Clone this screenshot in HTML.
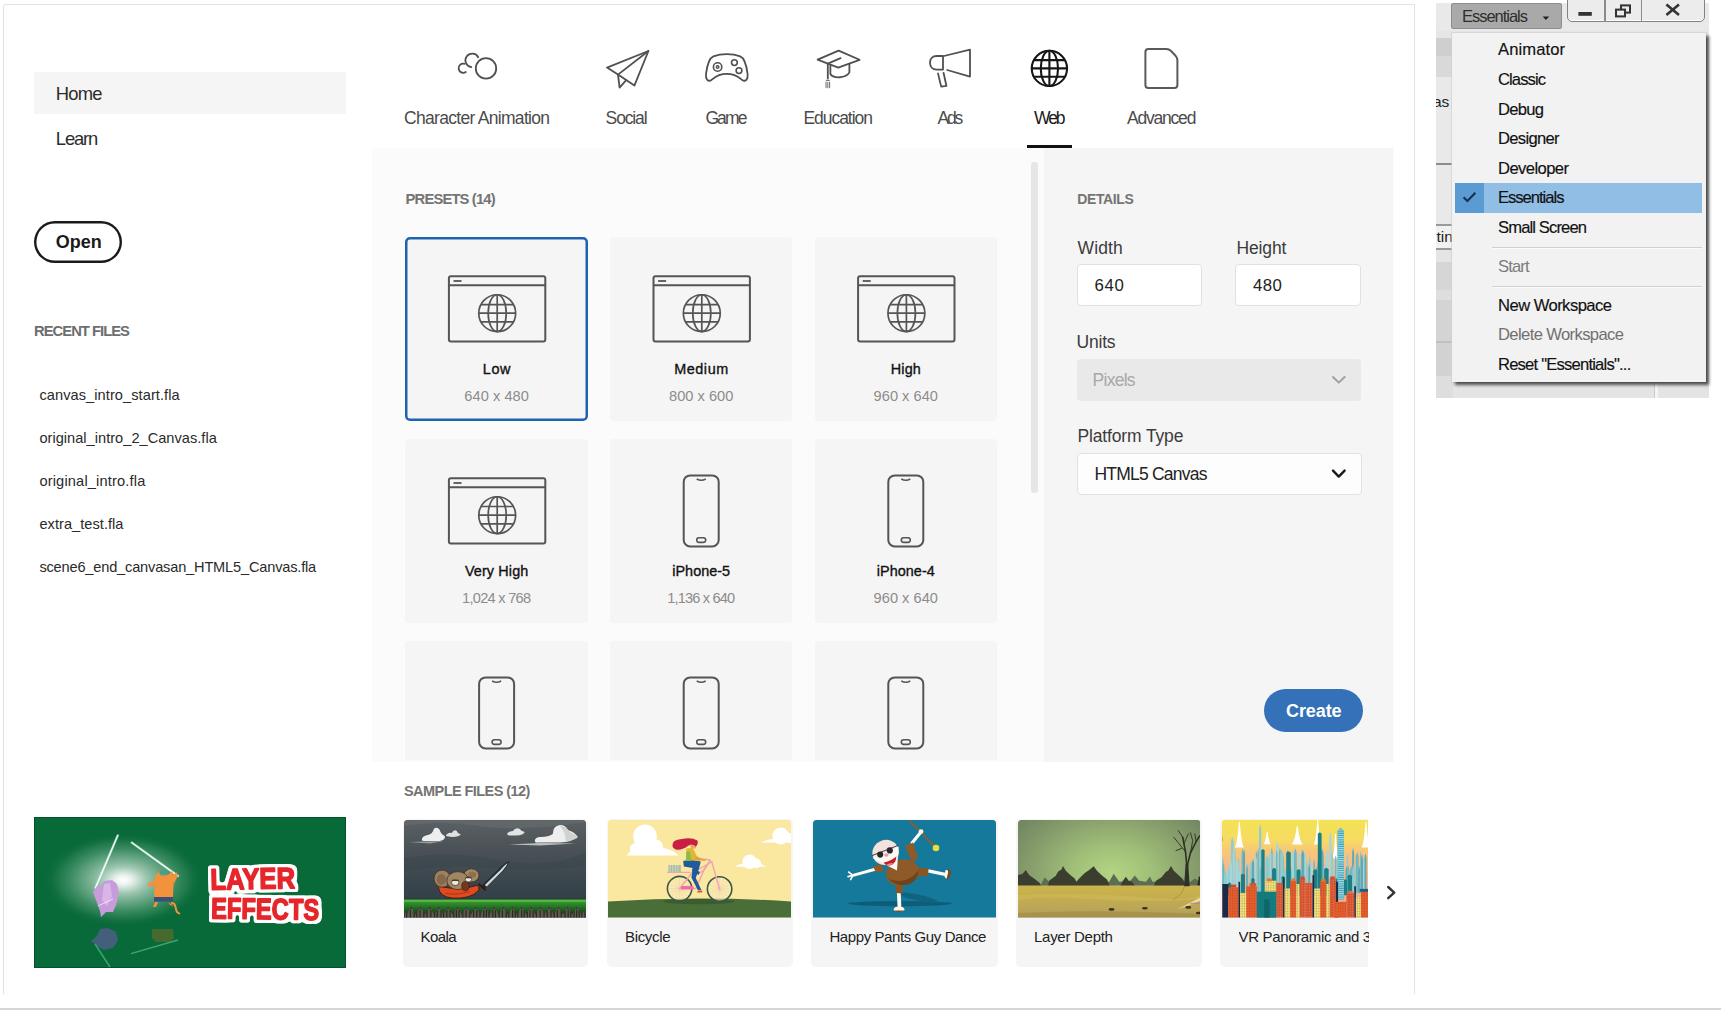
<!DOCTYPE html>
<html lang="en"><head><meta charset="utf-8"><title>Animate - Home</title>
<style>
html,body{margin:0;padding:0;background:#fff;}
body{width:1725px;height:1015px;position:relative;overflow:hidden;font-family:"Liberation Sans",Arial,sans-serif;}
.t{position:absolute;white-space:nowrap;display:block;}
.b{position:absolute;box-sizing:border-box;}
svg{position:absolute;overflow:visible;}
</style></head><body>

<div class="b" style="left:3px;top:4px;width:1412px;height:990px;border:1px solid #e2e2e2;border-bottom:none;border-radius:3px 0 0 0;"></div>
<div class="b" style="left:0px;top:1008px;width:1721px;height:2px;background:#d6d6d6;"></div>
<div class="b" style="left:34px;top:72px;width:312px;height:42px;background:#f5f5f5;"></div>
<span class="t" style="left:55.80px;top:84.62px;font-size:18.4px;line-height:18.4px;color:#2c2c2c;letter-spacing:-0.776px;">Home</span>
<span class="t" style="left:55.80px;top:129.92px;font-size:18.4px;line-height:18.4px;color:#2c2c2c;letter-spacing:-1.126px;">Learn</span>
<div class="b" style="left:34px;top:221.2px;width:88px;height:41.80000000000001px;box-shadow:inset 0 0 0 2.4px #1a1a1a;border-radius:21px;"></div>
<span class="t" style="left:55.80px;top:233.26px;font-size:18px;line-height:18px;color:#1a1a1a;font-weight:700;">Open</span>
<span class="t" style="left:34.00px;top:324.07px;font-size:14.8px;line-height:14.8px;color:#6e6e6e;letter-spacing:-0.994px;font-weight:700;">RECENT FILES</span>
<span class="t" style="left:39.40px;top:387.64px;font-size:14.6px;line-height:14.6px;color:#2a2a2a;letter-spacing:0.074px;">canvas_intro_start.fla</span>
<span class="t" style="left:39.40px;top:430.84px;font-size:14.6px;line-height:14.6px;color:#2a2a2a;letter-spacing:0.022px;">original_intro_2_Canvas.fla</span>
<span class="t" style="left:39.40px;top:473.74px;font-size:14.6px;line-height:14.6px;color:#2a2a2a;letter-spacing:0.168px;">original_intro.fla</span>
<span class="t" style="left:39.40px;top:516.94px;font-size:14.6px;line-height:14.6px;color:#2a2a2a;letter-spacing:0.042px;">extra_test.fla</span>
<span class="t" style="left:39.40px;top:560.14px;font-size:14.6px;line-height:14.6px;color:#2a2a2a;letter-spacing:-0.180px;">scene6_end_canvasan_HTML5_Canvas.fla</span>
<span class="t" style="left:404.00px;top:109.89px;font-size:17.5px;line-height:17.5px;color:#4b4b4b;letter-spacing:-0.697px;">Character Animation</span>
<span class="t" style="left:605.60px;top:109.89px;font-size:17.5px;line-height:17.5px;color:#4b4b4b;letter-spacing:-1.137px;">Social</span>
<span class="t" style="left:705.40px;top:109.89px;font-size:17.5px;line-height:17.5px;color:#4b4b4b;letter-spacing:-1.896px;">Game</span>
<span class="t" style="left:803.40px;top:109.89px;font-size:17.5px;line-height:17.5px;color:#4b4b4b;letter-spacing:-1.034px;">Education</span>
<span class="t" style="left:937.60px;top:109.89px;font-size:17.5px;line-height:17.5px;color:#4b4b4b;letter-spacing:-2.194px;">Ads</span>
<span class="t" style="left:1034.00px;top:109.89px;font-size:17.5px;line-height:17.5px;color:#1a1a1a;letter-spacing:-2.050px;">Web</span>
<span class="t" style="left:1127.00px;top:109.89px;font-size:17.5px;line-height:17.5px;color:#4b4b4b;letter-spacing:-1.211px;">Advanced</span>
<div class="b" style="left:1027px;top:145px;width:45.40000000000009px;height:2.5999999999999943px;background:#111;"></div>
<div class="b" style="left:372px;top:148px;width:1022px;height:614.4px;background:#fbfbfb;"></div>
<div class="b" style="left:1043.5px;top:148px;width:349.5px;height:614.4px;background:#f5f5f5;"></div>
<div class="b" style="left:1031px;top:162px;width:7px;height:331px;background:#e6e6e6;border-radius:3px;"></div>
<span class="t" style="left:405.60px;top:192.07px;font-size:14.8px;line-height:14.8px;color:#747474;letter-spacing:-0.866px;font-weight:700;">PRESETS (14)</span>
<div class="b" style="left:372px;top:148px;width:660px;height:612.4px;overflow:hidden;">
<div class="b" style="left:33.4px;top:89px;width:182.4px;height:184px;background:#f5f5f5;border-radius:4px;box-shadow:inset 0 0 0 2.5px #1e63b3;border-radius:5px;"></div>
<div class="b" style="left:238px;top:89px;width:182.39999999999998px;height:184px;background:#f5f5f5;border-radius:4px;"></div>
<div class="b" style="left:442.6px;top:89px;width:182.39999999999998px;height:184px;background:#f5f5f5;border-radius:4px;"></div>
<div class="b" style="left:33.4px;top:291px;width:182.4px;height:184px;background:#f5f5f5;border-radius:4px;"></div>
<div class="b" style="left:238px;top:291px;width:182.39999999999998px;height:184px;background:#f5f5f5;border-radius:4px;"></div>
<div class="b" style="left:442.6px;top:291px;width:182.39999999999998px;height:184px;background:#f5f5f5;border-radius:4px;"></div>
<div class="b" style="left:33.4px;top:493px;width:182.4px;height:184px;background:#f5f5f5;border-radius:4px;"></div>
<div class="b" style="left:238px;top:493px;width:182.39999999999998px;height:184px;background:#f5f5f5;border-radius:4px;"></div>
<div class="b" style="left:442.6px;top:493px;width:182.39999999999998px;height:184px;background:#f5f5f5;border-radius:4px;"></div>
</div>
<span class="t" style="left:482.80px;top:362.11px;font-size:14.4px;line-height:14.4px;color:#111;letter-spacing:0.588px;-webkit-text-stroke:0.35px #111;">Low</span>
<span class="t" style="left:464.30px;top:388.64px;font-size:14.6px;line-height:14.6px;color:#8c8c8c;letter-spacing:0.054px;">640 x 480</span>
<span class="t" style="left:674.20px;top:362.11px;font-size:14.4px;line-height:14.4px;color:#111;letter-spacing:0.562px;-webkit-text-stroke:0.35px #111;">Medium</span>
<span class="t" style="left:669.00px;top:388.64px;font-size:14.6px;line-height:14.6px;color:#8c8c8c;letter-spacing:0.029px;">800 x 600</span>
<span class="t" style="left:890.80px;top:362.11px;font-size:14.4px;line-height:14.4px;color:#111;letter-spacing:0.136px;-webkit-text-stroke:0.35px #111;">High</span>
<span class="t" style="left:873.60px;top:388.64px;font-size:14.6px;line-height:14.6px;color:#8c8c8c;letter-spacing:0.029px;">960 x 640</span>
<span class="t" style="left:464.90px;top:564.11px;font-size:14.4px;line-height:14.4px;color:#111;letter-spacing:0.122px;-webkit-text-stroke:0.35px #111;">Very High</span>
<span class="t" style="left:462.10px;top:590.64px;font-size:14.6px;line-height:14.6px;color:#8c8c8c;letter-spacing:-0.728px;">1,024 x 768</span>
<span class="t" style="left:672.20px;top:564.11px;font-size:14.4px;line-height:14.4px;color:#111;letter-spacing:0.047px;-webkit-text-stroke:0.35px #111;">iPhone-5</span>
<span class="t" style="left:667.20px;top:590.64px;font-size:14.6px;line-height:14.6px;color:#8c8c8c;letter-spacing:-0.828px;">1,136 x 640</span>
<span class="t" style="left:876.80px;top:564.11px;font-size:14.4px;line-height:14.4px;color:#111;letter-spacing:0.047px;-webkit-text-stroke:0.35px #111;">iPhone-4</span>
<span class="t" style="left:873.60px;top:590.64px;font-size:14.6px;line-height:14.6px;color:#8c8c8c;letter-spacing:0.029px;">960 x 640</span>
<span class="t" style="left:1077.20px;top:191.95px;font-size:14px;line-height:14px;color:#747474;letter-spacing:-0.378px;font-weight:700;">DETAILS</span>
<span class="t" style="left:1077.60px;top:240.29px;font-size:17.5px;line-height:17.5px;color:#3c3c3c;letter-spacing:0.072px;">Width</span>
<span class="t" style="left:1236.40px;top:240.29px;font-size:17.5px;line-height:17.5px;color:#3c3c3c;letter-spacing:-0.115px;">Height</span>
<div class="b" style="left:1077px;top:264.4px;width:125.40000000000009px;height:42.0px;background:#fff;border:1px solid #e1e1e1;border-radius:4px;"></div>
<div class="b" style="left:1235.4px;top:264.4px;width:125.59999999999991px;height:42.0px;background:#fff;border:1px solid #e1e1e1;border-radius:4px;"></div>
<span class="t" style="left:1094.40px;top:277.78px;font-size:16.8px;line-height:16.8px;color:#222;letter-spacing:0.772px;">640</span>
<span class="t" style="left:1253.00px;top:277.78px;font-size:16.8px;line-height:16.8px;color:#222;letter-spacing:0.472px;">480</span>
<span class="t" style="left:1076.60px;top:334.09px;font-size:17.5px;line-height:17.5px;color:#3c3c3c;letter-spacing:-0.225px;">Units</span>
<div class="b" style="left:1077px;top:358.6px;width:284px;height:42.39999999999998px;background:#e9e9e9;border-radius:4px;"></div>
<span class="t" style="left:1092.60px;top:372.19px;font-size:17.5px;line-height:17.5px;color:#a8a8a8;letter-spacing:-0.745px;">Pixels</span>
<span class="t" style="left:1077.40px;top:427.79px;font-size:17.5px;line-height:17.5px;color:#3c3c3c;letter-spacing:-0.135px;">Platform Type</span>
<div class="b" style="left:1077px;top:453px;width:285px;height:42px;background:#fdfdfd;border:1px solid #e1e1e1;border-radius:4px;"></div>
<span class="t" style="left:1094.40px;top:465.59px;font-size:17.5px;line-height:17.5px;color:#222;letter-spacing:-0.776px;">HTML5 Canvas</span>
<div class="b" style="left:1264.4px;top:689px;width:98.59999999999991px;height:43px;background:#3571b8;border-radius:21.5px;"></div>
<span class="t" style="left:1286.00px;top:702.16px;font-size:18px;line-height:18px;color:#fff;letter-spacing:-0.094px;font-weight:700;">Create</span>
<span class="t" style="left:404.00px;top:784.13px;font-size:14.5px;line-height:14.5px;color:#747474;letter-spacing:-0.560px;font-weight:700;">SAMPLE FILES (12)</span>
<div class="b" style="left:402.6px;top:819px;width:185.39999999999998px;height:148px;background:#f5f5f5;border-radius:5px;"></div>
<svg width="182.0" height="97.5" viewBox="404.2 820 182.0 97.5" style="left:404.2px;top:820px;overflow:hidden;"><defs><clipPath id="cp0"><path d="M404.2 917.5V823.5Q404.2 820 407.7 820H582.7Q586.2 820 586.2 823.5V917.5Z"/></clipPath><linearGradient id="ksky" x1="0" y1="0" x2="0" y2="1"><stop offset="0" stop-color="#5b6063"/><stop offset="0.3" stop-color="#4a5257"/><stop offset="0.7" stop-color="#36434a"/><stop offset="1" stop-color="#2d3b43"/></linearGradient>
<linearGradient id="kgr" x1="0" y1="0" x2="0" y2="1"><stop offset="0" stop-color="#3fa231"/><stop offset="0.35" stop-color="#2c8228"/><stop offset="0.7" stop-color="#1e5a1e"/><stop offset="1" stop-color="#143c16"/></linearGradient></defs><g clip-path="url(#cp0)"><rect x="404.2" y="820" width="182" height="98" fill="url(#ksky)"/><path d="M404 826Q440 820 480 826T586 822V820H404Z" fill="#6a6f72" opacity="0.5"/><path d="M404 858Q450 850 500 860T586 852V866Q540 872 490 868T404 872Z" fill="#3a464c" opacity="0.5"/><g fill="#eeeeee"><path d="M422 840Q422 836 428 835Q433 834 434 829Q437 826 440 830Q441 834 445 836Q446 840 440 841H426Q422 841 422 840Z"/><path d="M446 836Q448 832 452 833Q454 829 457 831Q458 834 461 834Q460 837 452 837Z" opacity="0.9"/><path d="M507 834Q509 831 513 831Q516 827 520 829Q521 831 525 832Q524 835 516 835.6H509Z" opacity="0.92"/><path d="M535 841Q535 837 541 837Q549 837 553 834Q553 826 560 825Q566 825 568 830Q575 832 578 837Q572 842 560 842.6H538Q535 843 535 841Z"/></g><path d="M560 826Q567 826 570 832Q576 834 578 838L566 842Q566 832 560 826Z" fill="#c9c9c9" opacity="0.8"/><path d="M509 844.6L540 843L576 843.6L540 845.4Z" fill="#d8dadb" opacity="0.8"/><path d="M409 842L444 841L430 843.4Z" fill="#b9bcbe" opacity="0.7"/><rect x="404.2" y="909" width="182" height="9" fill="#5f584e"/><path d="M404.2 910V918M406.8 910V918M410.6 910V918M414.4 910V918M417.0 910V918M420.2 910V918M424.0 910V918M427.2 910V918M431.0 910V918M434.8 910V918M437.4 910V918M441.2 910V918M443.8 910V918M447.0 910V918M450.2 910V918M454.0 910V918M456.6 910V918M459.2 910V918M463.0 910V918M466.2 910V918M470.0 910V918M473.8 910V918M477.0 910V918M480.2 910V918M484.0 910V918M486.6 910V918M489.2 910V918M493.0 910V918M495.6 910V918M499.4 910V918M502.6 910V918M506.4 910V918M509.0 910V918M512.8 910V918M515.4 910V918M518.0 910V918M521.8 910V918M524.4 910V918M527.6 910V918M530.2 910V918M533.4 910V918M536.6 910V918M540.4 910V918M544.2 910V918M547.4 910V918M551.2 910V918M554.4 910V918M557.6 910V918M561.4 910V918M565.2 910V918M568.4 910V918M571.0 910V918M574.2 910V918M576.8 910V918M579.4 910V918M582.0 910V918M585.2 910V918" stroke="#2d2923" stroke-width="1.2"/><rect x="404.2" y="898.6" width="182" height="1.2" fill="#26303a"/><path d="M404.2 899.4H586.2V909L581.6 914.6L577.0 906.6L572.4 914.6L567.8 906.6L563.2 914.6L558.6 906.6L554.0 914.6L549.4 906.6L544.8 914.6L540.2 906.6L535.6 914.6L531.0 906.6L526.4 914.6L521.8 906.6L517.2 914.6L512.6 906.6L508.0 914.6L503.4 906.6L498.8 914.6L494.2 906.6L489.6 914.6L485.0 906.6L480.4 914.6L475.8 906.6L471.2 914.6L466.6 906.6L462.0 914.6L457.4 906.6L452.8 914.6L448.2 906.6L443.6 914.6L439.0 906.6L434.4 914.6L429.8 906.6L425.2 914.6L420.6 906.6L416.0 914.6L411.4 906.6L406.8 914.6L402.2 906.6Z" fill="url(#kgr)"/><rect x="404.2" y="899.8" width="182" height="2.2" fill="#58c044" opacity="0.75"/><path d="M438.6 887.4Q440 896.6 452 898Q470 899.4 478.4 891Q480.6 887 477 885.4Q460 891 440 886.4Z" fill="#e04a20" stroke="#4a170c" stroke-width="0.9"/><path d="M446 893.4Q458 895.6 470 891.4" stroke="#a02c12" stroke-width="0.8" fill="none"/><g stroke="#3e2f20" stroke-width="0.8"><ellipse cx="442.4" cy="878.6" rx="8.2" ry="8.6" fill="#9c815d"/><ellipse cx="471.6" cy="875.4" rx="7.6" ry="6.6" fill="#a58a66"/><ellipse cx="458" cy="880.6" rx="11" ry="9" fill="#a08662"/></g><ellipse cx="441.6" cy="879.4" rx="4.6" ry="5.4" fill="#86694a"/><ellipse cx="472.4" cy="874.6" rx="4" ry="3.2" fill="#8d7150"/><ellipse cx="465.6" cy="886" rx="3.8" ry="4.8" fill="#74371f" stroke="#3a1c10" stroke-width="0.6"/><ellipse cx="455.4" cy="882.6" rx="3.7" ry="3" fill="#e9e6e0" stroke="#33261a" stroke-width="0.7"/><ellipse cx="468.6" cy="879.4" rx="3.2" ry="2.6" fill="#e9e6e0" stroke="#33261a" stroke-width="0.7"/><path d="M452 880.4H459M465.6 877.6H471.6" stroke="#4a3a2a" stroke-width="1.2"/><path d="M481.6 886L500 868Q506 862 509.4 861.2Q509 864.6 503.6 871L485 888.6Z" fill="#23282c"/><path d="M485 885L501 869.4Q505.6 864.4 508 863Q507 866 503 870.4L487 886.6Z" fill="#d2d6d9"/><path d="M478.6 883.6L486 890.4" stroke="#3a140c" stroke-width="1.8"/></g></svg>
<span class="t" style="left:420.60px;top:929.30px;font-size:15px;line-height:15px;color:#222;letter-spacing:-0.600px;">Koala</span>
<div class="b" style="left:607px;top:819px;width:186px;height:148px;background:#f5f5f5;border-radius:5px;"></div>
<svg width="183.0" height="97.5" viewBox="608.2 820 183.0 97.5" style="left:608.2px;top:820px;overflow:hidden;"><defs><clipPath id="cp1"><path d="M608.2 917.5V823.5Q608.2 820 611.7 820H787.7Q791.2 820 791.2 823.5V917.5Z"/></clipPath></defs><g clip-path="url(#cp1)"><rect x="608.2" y="820" width="183" height="98" fill="#fae8a1"/><g fill="#ffffff"><circle cx="645.2" cy="836.4" r="11.8"/><circle cx="656" cy="847" r="7.4"/><circle cx="636" cy="849" r="6"/><path d="M626.6 855.6Q632 848 640 848H664Q674 850 678.8 855.6Z"/><circle cx="781" cy="836" r="8.4"/><circle cx="790" cy="838" r="5"/><path d="M761 842.4Q768 839 774 839H792V842.4Z"/><circle cx="749.8" cy="861.8" r="7.2"/><circle cx="756.4" cy="863.4" r="4.8"/><path d="M734.6 866.8Q740 863.6 745 863.6H760Q764 865 766 866.8Z"/></g><path d="M608.2 901.4Q700 895.4 791.2 901.4V918H608.2Z" fill="#4a6e38"/><ellipse cx="699" cy="901.6" rx="36" ry="2.6" fill="#3c5c2e"/><circle cx="679.8" cy="888.6" r="12.2" fill="#fbeeb8" fill-opacity="0.55" stroke="#3c574a" stroke-width="1.6"/><path d="M668.8 888.6L690.8 888.6M669.6 884.4L690.0 892.8M672.0 880.8L687.6 896.4M675.6 878.4L684.0 898.8M679.8 877.6L679.8 899.6M684.0 878.4L675.6 898.8M687.6 880.8L672.0 896.4M690.0 884.4L669.6 892.8" stroke="#e9c9b0" stroke-width="0.5"/><circle cx="719.8" cy="889" r="12.2" fill="#fbeeb8" fill-opacity="0.55" stroke="#3c574a" stroke-width="1.6"/><path d="M708.8 889.0L730.8 889.0M709.6 884.8L730.0 893.2M712.0 881.2L727.6 896.8M715.6 878.8L724.0 899.2M719.8 878.0L719.8 900.0M724.0 878.8L715.6 899.2M727.6 881.2L712.0 896.8M730.0 884.8L709.6 893.2" stroke="#e9c9b0" stroke-width="0.5"/><g fill="none" stroke="#f1a3b3" stroke-width="1.4" stroke-linecap="round"><path d="M679.8 888.6L692 873L712 862L719.8 889"/><path d="M692 873Q704 876 710 860"/><path d="M679.8 888.6H696L706 866"/><path d="M668 872.4H690"/><path d="M703 860Q708 858 712 862"/></g><rect x="681" y="886" width="13" height="3.6" rx="1.6" fill="#f06ea8"/><rect x="668.6" y="865" width="12.4" height="7" fill="#a9bba2"/><path d="M670.4 865v7M673 865v7M675.6 865v7M678.2 865v7" stroke="#dfe8d8" stroke-width="0.7"/><path d="M683.4 861L690 859.4L701 861.6L699.4 868L696 878L701.6 890H698L691.6 877.6L693 868L684 866.4Z" fill="#1e5a9c"/><path d="M693 868L700 872L699 875L692 871Z" fill="#1e5a9c"/><path d="M686.6 848.6L693 848L697 856L701 859L700 861L692.4 860.4L686 861Z" fill="#e2b634"/><path d="M686.6 852L690 851L691.6 860.4L686 861Z" fill="#86bf45"/><path d="M696 856.6L706 859.4L705.4 861L695 859.6Z" fill="#e2a24a"/><ellipse cx="693.6" cy="845.2" rx="3.2" ry="3.6" fill="#e8a86a"/><path d="M672.6 846Q672 839.6 682 839Q692 837 697.6 840.6Q699 843.6 696 846.6Q692 842.6 688 846Q682 850.6 676 849.6Q673 848.6 672.6 846Z" fill="#c81f42"/><path d="M698 890.6h4.4v1.8h-5Z" fill="#c8602a"/></g></svg>
<span class="t" style="left:625.00px;top:929.30px;font-size:15px;line-height:15px;color:#222;letter-spacing:-0.325px;">Bicycle</span>
<div class="b" style="left:811px;top:819px;width:187px;height:148px;background:#f5f5f5;border-radius:5px;"></div>
<svg width="183.0" height="97.5" viewBox="813 820 183.0 97.5" style="left:813px;top:820px;overflow:hidden;"><defs><clipPath id="cp2"><path d="M813 917.5V823.5Q813 820 816.5 820H992.5Q996 820 996 823.5V917.5Z"/></clipPath></defs><g clip-path="url(#cp2)"><rect x="813" y="820" width="184" height="98" fill="#14799a"/><ellipse cx="900" cy="903.6" rx="52" ry="2.6" fill="#0e5d78"/><ellipse cx="918" cy="897.6" rx="20" ry="3" fill="#0f6480" transform="rotate(12 918 897.6)"/><path d="M908.8 820L934 845.6" stroke="#9c5a22" stroke-width="1.6"/><circle cx="936" cy="848" r="3.3" fill="#e6df3c"/><g stroke="#fdfaf6" stroke-linecap="round" fill="none"><path d="M912 843L920.6 832.4" stroke-width="3.2"/><path d="M876 869L853 875.4" stroke-width="3"/><path d="M853 875.4L848.6 872M853 875.4L848 876.6M853 875.4L850.6 879.6" stroke-width="1.6"/><path d="M927 870.6L945 874.4" stroke-width="3.4"/><path d="M898.8 892L899.4 906" stroke-width="3.8"/></g><circle cx="921" cy="831.6" r="2.4" fill="#fdfaf6"/><path d="M917 867.6L928.6 868.6L928 875.6L917 877Z" fill="#8a5524"/><path d="M895.6 884L903 885L902.4 893.6L895.8 893Z" fill="#8a5524"/><path d="M948 869.6Q952 869 951 873Q950 878 947.4 879.6Q945 879 946 875Z" fill="#7a4a1e"/><path d="M945.6 870Q948.6 869.4 948 873L946.6 878.6Q944 878 944.6 874Z" fill="#fdfaf6"/><path d="M893.6 909.4Q894 906.4 899 906.4Q904 906.4 904.6 909.4Q904 911.6 899 911.6Q894 911.6 893.6 909.4Z" fill="#fdfaf6"/><path d="M894 910.4H904.4Q903 912 899 912Q895 912 894 910.4Z" fill="#7a4a1e"/><ellipse cx="902.4" cy="872.6" rx="16.6" ry="12.8" fill="#8e5a28" transform="rotate(-18 902.4 872.6)"/><path d="M888 878Q896 888 910 884Q918 880 918.6 870Q912 880 900 881Q892 881 888 878Z" fill="#6f441c"/><path d="M905 846L913 842.6L918 858L912 862Z" fill="#8e5a28"/><path d="M873 866.6L881 864L884 871L876 872.4Z" fill="#8e5a28"/><ellipse cx="885.6" cy="852.4" rx="13.4" ry="12.4" fill="#f3e1dc" transform="rotate(-20 885.6 852.4)"/><path d="M872.6 858L898.6 846.6L897 870.6L889 866.6Z" fill="#fdfaf6"/><path d="M872 855.6L898 845.4" stroke="#2a2a30" stroke-width="0.9"/><circle cx="880.2" cy="854.6" r="3.1" fill="#26262c"/><circle cx="889.8" cy="850.4" r="3.1" fill="#26262c"/><ellipse cx="886.4" cy="855" rx="2.2" ry="1.8" fill="#f09a98"/><path d="M883.6 862.4Q890 861.6 896.4 856.6Q896 864 890.4 865.4Q885.6 866 883.6 862.4Z" fill="#c51f2b"/><path d="M886.6 864.6Q890 862.6 893.4 863Q891.6 865.4 888.6 865.6Z" fill="#f28a8a"/></g></svg>
<span class="t" style="left:829.40px;top:929.30px;font-size:15px;line-height:15px;color:#222;letter-spacing:-0.404px;">Happy Pants Guy Dance</span>
<div class="b" style="left:1015.6px;top:819px;width:185.9999999999999px;height:148px;background:#f5f5f5;border-radius:5px;"></div>
<svg width="182.6" height="97.5" viewBox="1017.6 820 182.6 97.5" style="left:1017.6px;top:820px;overflow:hidden;"><defs><clipPath id="cp3"><path d="M1017.6 917.5V823.5Q1017.6 820 1021.1 820H1196.7Q1200.2 820 1200.2 823.5V917.5Z"/></clipPath><radialGradient id="ldsky" cx="1112" cy="874" r="115" gradientUnits="userSpaceOnUse" gradientTransform="translate(0 262) scale(1 0.7)"><stop offset="0" stop-color="#b4d582"/><stop offset="0.35" stop-color="#a0bf78"/><stop offset="0.7" stop-color="#889f6c"/><stop offset="1" stop-color="#738763"/></radialGradient><linearGradient id="ldg" x1="0" y1="0" x2="0" y2="1"><stop offset="0" stop-color="#ccb44c"/><stop offset="0.35" stop-color="#c4ad4f"/><stop offset="0.7" stop-color="#bba658"/><stop offset="1" stop-color="#ae9a50"/></linearGradient></defs><g clip-path="url(#cp3)"><rect x="1017.6" y="820" width="183" height="66" fill="url(#ldsky)"/><path d="M1039.8 885.7L1044.3 877.3L1048.7 881.8L1108.8 881.8L1113.3 873.8L1118.9 881.8L1130.0 880.7L1134.4 875.4L1138.9 880.7L1145.6 881.8L1149.5 876.6L1152.2 881.8L1190.1 881.8L1194.5 878.4L1200.1 881.8L1200.1 885.7Z" fill="#5d6d55"/><path d="M1017.6 885.7L1017.6 875.1L1022.0 874.0L1025.4 870.1L1028.7 875.1L1034.3 879.0L1039.3 882.9L1040.9 885.7L1047.6 885.7L1048.7 880.7L1055.4 875.7L1057.6 871.8L1061.0 869.5L1062.6 866.0L1065.4 870.7L1069.9 875.1L1074.3 878.4L1076.0 881.8L1078.8 878.4L1084.4 872.9L1088.8 870.1L1093.3 866.2L1096.6 870.7L1101.0 875.1L1106.6 879.6L1109.4 885.7L1120.0 885.7L1122.2 881.2L1125.5 876.8L1128.3 880.7L1131.7 881.8L1134.4 885.7L1153.4 885.7L1155.6 880.7L1161.2 877.3L1165.6 871.8L1167.8 870.7L1170.6 866.0L1173.4 870.7L1177.9 875.1L1182.3 879.0L1184.0 881.8L1184.0 885.7Z" fill="#3b3e2f"/><path d="M1196.8 885.7L1198.4 877.3L1200.1 875.1V885.7Z" fill="#2c2e24"/><rect x="1017.6" y="885.6" width="183" height="33" fill="url(#ldg)"/><path d="M1017.6 895Q1080 892 1140 897T1200.2 893V899Q1150 903 1090 899T1017.6 901Z" fill="#d2bc58" opacity="0.5"/><path d="M1017.6 913Q1100 909 1200.2 914V918H1017.6Z" fill="#9e8a48" opacity="0.6"/><g stroke="#2f3028" fill="none" stroke-linecap="round"><path d="M1183.7 886.2L1185.2 864.0H1187.9L1189.2 886.2Z" fill="#2f3028" stroke="none"/><path d="M1186.4 865.1L1185.1 851.7L1182.3 837.3" stroke-width="1.6"/><path d="M1187.0 865.1L1190.1 852.8L1195.7 841.7L1199.0 836.1" stroke-width="1.6"/><path d="M1185.1 851.7L1177.9 842.8L1173.4 837.3M1183.4 843.9L1187.9 833.9M1182.3 837.3L1177.9 830.6M1190.1 852.8L1192.3 840.6L1190.1 832.8M1195.7 841.7L1194.5 833.9M1181.2 848.4L1175.6 850.6" stroke-width="0.9"/></g><path d="M1184.0 886.2Q1182.3 895.1 1172.3 899.6" stroke="#9c8a44" stroke-width="1" fill="none" opacity="0.7"/><path d="M1176.7 909.4L1200.1 897.4V900.7Z" fill="#ecdf9c"/><path d="M1190.1 903.5L1200.1 902.9" stroke="#a070c0" stroke-width="0.8"/><ellipse cx="1111.1" cy="909.4" rx="3" ry="1.3" fill="#3a3424"/><ellipse cx="1144.5" cy="908.3" rx="3" ry="1.3" fill="#3a3424"/><ellipse cx="1198.4" cy="913.0" rx="3" ry="1.3" fill="#3a3424"/><ellipse cx="1187.9" cy="907.4" rx="3" ry="1.3" fill="#3a3424"/></g></svg>
<span class="t" style="left:1034.00px;top:929.30px;font-size:15px;line-height:15px;color:#222;letter-spacing:-0.275px;">Layer Depth</span>
<div class="b" style="left:1220px;top:819px;width:148px;height:148px;background:#f5f5f5;border-radius:5px 0 0 5px;"></div>
<svg width="146.6" height="97.5" viewBox="1221.8 820 146.6 97.5" style="left:1221.8px;top:820px;overflow:hidden;"><defs><clipPath id="cp4"><path d="M1221.8 917.5V823Q1221.8 820 1224.8 820H1368.4V917.5Z"/></clipPath><linearGradient id="vrsky" x1="0" y1="0" x2="0" y2="1"><stop offset="0" stop-color="#f2e352"/><stop offset="0.22" stop-color="#f6db62"/><stop offset="0.34" stop-color="#f8c57c"/><stop offset="0.6" stop-color="#f5b48e"/><stop offset="1" stop-color="#f0a888"/></linearGradient><pattern id="pA" width="2.4" height="2.6" patternUnits="userSpaceOnUse"><rect width="2.4" height="2.6" fill="#e8632b"/><rect x="0.5" y="0.6" width="1.3" height="1.5" fill="#c8452b"/></pattern><pattern id="pB" width="2.4" height="2.6" patternUnits="userSpaceOnUse"><rect width="2.4" height="2.6" fill="#f6e88c"/><rect x="0.5" y="0.6" width="1.3" height="1.5" fill="#b8a23c"/></pattern><pattern id="pC" width="2.4" height="2.6" patternUnits="userSpaceOnUse"><rect width="2.4" height="2.6" fill="#cf4b35"/><rect x="0.5" y="0.6" width="1.3" height="1.5" fill="#ea7a3c"/></pattern><pattern id="pL" width="6" height="2.2" patternUnits="userSpaceOnUse"><rect width="6" height="2.2" fill="#a9dde4"/><rect y="1.1" width="6" height="1.1" fill="#3b9fb0"/></pattern></defs><g clip-path="url(#cp4)"><rect x="1221.8" y="818" width="148" height="100" fill="url(#vrsky)"/><path d="M1238.71 821.68H1239.6Q1241.26 844.16 1243.83 847.5H1234.48Q1237.05 844.16 1238.71 821.68Z" fill="#ffffff"/><path d="M1266.53 831.7H1267.42Q1268.48 840.82 1270.32 844.16H1263.64Q1265.48 840.82 1266.53 831.7Z" fill="#ffffff"/><path d="M1296.59 826.13H1297.48Q1299.54 841.27 1302.6 844.61H1291.47Q1294.53 841.27 1296.59 826.13Z" fill="#ffffff"/><path d="M1317.07 819.45H1317.96Q1319.32 841.27 1321.52 844.61H1313.51Q1315.71 841.27 1317.07 819.45Z" fill="#ffffff"/><path d="M1365.27 821.68H1366.16Q1367.71 844.16 1370.16 847.5H1361.26Q1363.71 844.16 1365.27 821.68Z" fill="#ffffff"/><path d="M1334.88 833.92H1335.77Q1336.83 855.07 1338.66 858.41H1331.98Q1333.82 855.07 1334.88 833.92Z" fill="#ffffff"/><path d="M1230.69 892.92V841.71L1231.92 837.26H1232.36L1233.59 841.71V892.92Z" fill="#8fccd2"/><path d="M1258.85 892.92V828.91L1259.74 824.46H1260.19L1261.08 828.91V892.92Z" fill="#8fccd2"/><path d="M1276.11 892.92V846.17L1277.0 841.71H1277.44L1278.33 846.17V892.92Z" fill="#a5d6da"/><path d="M1328.87 892.92V837.26L1329.87 832.81H1330.31L1331.32 837.26V892.92Z" fill="#a5d6da"/><path d="M1300.71 892.92V853.96L1301.49 849.51H1301.93L1302.71 853.96V892.92Z" fill="#a5d6da"/><path d="M1304.05 892.92V856.74L1304.82 852.29H1305.27L1306.05 856.74V892.92Z" fill="#a5d6da"/><path d="M1362.71 892.92V860.64L1363.82 856.18H1364.26L1365.38 860.64V892.92Z" fill="#a5d6da"/><path d="M1356.58 892.92V865.09L1357.7 860.64H1358.14L1359.25 865.09V892.92Z" fill="#a5d6da"/><path d="M1225.8 892.92V873.99L1226.91 869.54H1227.35L1228.47 873.99V892.92Z" fill="#a5d6da"/><path d="M1251.4 892.92V863.98L1252.51 859.52H1252.95L1254.07 863.98V892.92Z" fill="#5fa9b5"/><path d="M1266.42 892.92V861.75L1266.98 857.3H1267.42L1267.98 861.75V892.92Z" fill="#6fb9c3"/><path d="M1282.01 892.92V858.41L1282.56 853.96H1283.01L1283.56 858.41V892.92Z" fill="#6fb9c3"/><path d="M1292.91 892.92V861.75L1293.69 857.3H1294.14L1294.92 861.75V892.92Z" fill="#8fccd2"/><path d="M1308.5 892.92V860.64L1309.28 856.18H1309.72L1310.5 860.64V892.92Z" fill="#8fccd2"/><path d="M1335.21 892.92V861.75L1335.99 857.3H1336.44L1337.22 861.75V892.92Z" fill="#a5d6da"/><path d="M1351.91 892.92V852.85L1352.69 848.39H1353.13L1353.91 852.85V892.92Z" fill="#5fa9b5"/><path d="M1237.37 892.92V861.75L1238.04 857.3H1238.48L1239.15 861.75V892.92Z" fill="#8fccd2"/><path d="M1246.16 892.92V868.43L1246.94 863.98H1247.39L1248.17 868.43V892.92Z" fill="#8fccd2"/><path d="M1221.79 892.92V861.75L1222.46 857.3H1222.9L1223.57 861.75V892.92Z" fill="#8fccd2"/><path d="M1313.17 892.92V863.98L1313.73 859.52H1314.17L1314.73 863.98V892.92Z" fill="#6fb9c3"/><path d="M1322.08 892.92V856.18L1322.63 851.73H1323.08L1323.64 856.18V892.92Z" fill="#6fb9c3"/><path d="M1346.57 892.92V858.41L1347.12 853.96H1347.57L1348.12 858.41V892.92Z" fill="#8fccd2"/><path d="M1360.03 892.92V856.18L1360.48 851.73H1360.92L1361.37 856.18V892.92Z" fill="#6fb9c3"/><path d="M1270.99 892.92V852.85L1271.43 848.39H1271.88L1272.32 852.85V892.92Z" fill="#5fa9b5"/><path d="M1234.25 892.92V852.85L1234.7 848.39H1235.15L1235.59 852.85V892.92Z" fill="#8fccd2"/><path d="M1255.4 892.92V856.18L1255.85 851.73H1256.29L1256.74 856.18V892.92Z" fill="#5fa9b5"/><path d="M1286.57 892.92V866.2L1287.02 861.75H1287.46L1287.91 866.2V892.92Z" fill="#5fa9b5"/><path d="M1326.64 892.92V852.85L1327.09 848.39H1327.53L1327.98 852.85V892.92Z" fill="#a5d6da"/><path d="M1219.12 892.92V868.76L1220.34 864.31H1220.79L1222.01 868.76V892.92Z" fill="#6fb9c3"/><path d="M1222.23 892.92V867.32L1223.01 862.86H1223.46L1224.24 867.32V892.92Z" fill="#6fb9c3"/><path d="M1223.9 892.92V875.66L1225.13 871.21H1225.57L1226.8 875.66V892.92Z" fill="#8fccd2"/><path d="M1227.91 892.92V870.32L1228.69 865.87H1229.13L1229.91 870.32V892.92Z" fill="#8fccd2"/><path d="M1229.36 892.92V865.53L1230.36 861.08H1230.8L1231.81 865.53V892.92Z" fill="#a5d6da"/><path d="M1232.59 892.92V855.41L1233.14 850.95H1233.59L1234.14 855.41V892.92Z" fill="#a5d6da"/><path d="M1235.37 892.92V864.09L1236.59 859.63H1237.04L1238.26 864.09V892.92Z" fill="#a5d6da"/><path d="M1238.6 892.92V873.88L1239.37 869.43H1239.82L1240.6 873.88V892.92Z" fill="#a5d6da"/><path d="M1241.38 892.92V853.18L1241.93 848.73H1242.38L1242.94 853.18V892.92Z" fill="#6fb9c3"/><path d="M1242.83 892.92V853.85L1243.6 849.39H1244.05L1244.83 853.85V892.92Z" fill="#5fa9b5"/><path d="M1246.05 892.92V869.88L1246.61 865.42H1247.06L1247.61 869.88V892.92Z" fill="#5fa9b5"/><path d="M1249.28 892.92V865.98L1250.28 861.53H1250.73L1251.73 865.98V892.92Z" fill="#8fccd2"/><path d="M1251.62 892.92V869.65L1252.4 865.2H1252.84L1253.62 869.65V892.92Z" fill="#5fa9b5"/><path d="M1254.18 892.92V859.41L1255.18 854.96H1255.63L1256.63 859.41V892.92Z" fill="#a5d6da"/><path d="M1257.18 892.92V852.96L1257.74 848.5H1258.19L1258.74 852.96V892.92Z" fill="#6fb9c3"/><path d="M1259.41 892.92V871.43L1260.41 866.98H1260.86L1261.86 871.43V892.92Z" fill="#6fb9c3"/><path d="M1262.42 892.92V868.54L1262.97 864.09H1263.42L1263.97 868.54V892.92Z" fill="#8fccd2"/><path d="M1265.2 892.92V860.08L1266.2 855.63H1266.65L1267.65 860.08V892.92Z" fill="#8fccd2"/><path d="M1267.98 892.92V859.3L1268.98 854.85H1269.43L1270.43 859.3V892.92Z" fill="#8fccd2"/><path d="M1269.76 892.92V854.74L1270.32 850.28H1270.76L1271.32 854.74V892.92Z" fill="#a5d6da"/><path d="M1272.66 892.92V855.85L1273.66 851.4H1274.1L1275.11 855.85V892.92Z" fill="#a5d6da"/><path d="M1275.77 892.92V854.74L1276.33 850.28H1276.77L1277.33 854.74V892.92Z" fill="#6fb9c3"/><path d="M1278.67 892.92V852.85L1279.45 848.39H1279.89L1280.67 852.85V892.92Z" fill="#6fb9c3"/><path d="M1280.11 892.92V854.29L1281.34 849.84H1281.78L1283.01 854.29V892.92Z" fill="#8fccd2"/><path d="M1283.12 892.92V872.99L1284.34 868.54H1284.79L1286.01 872.99V892.92Z" fill="#8fccd2"/><path d="M1286.24 892.92V854.85L1287.02 850.4H1287.46L1288.24 854.85V892.92Z" fill="#5fa9b5"/><path d="M1289.35 892.92V871.99L1290.35 867.54H1290.8L1291.8 871.99V892.92Z" fill="#5fa9b5"/><path d="M1291.24 892.92V855.29L1292.25 850.84H1292.69L1293.69 855.29V892.92Z" fill="#a5d6da"/><path d="M1293.69 892.92V853.18L1294.92 848.73H1295.36L1296.59 853.18V892.92Z" fill="#6fb9c3"/><path d="M1297.59 892.92V856.18L1298.37 851.73H1298.81L1299.59 856.18V892.92Z" fill="#a5d6da"/><path d="M1299.48 892.92V872.88L1300.04 868.43H1300.48L1301.04 872.88V892.92Z" fill="#8fccd2"/><path d="M1301.15 892.92V854.51L1302.38 850.06H1302.82L1304.05 854.51V892.92Z" fill="#5fa9b5"/><path d="M1305.6 892.92V866.65L1306.38 862.2H1306.83L1307.61 866.65V892.92Z" fill="#8fccd2"/><path d="M1308.05 892.92V868.76L1308.83 864.31H1309.28L1310.06 868.76V892.92Z" fill="#5fa9b5"/><path d="M1310.39 892.92V867.32L1311.17 862.86H1311.61L1312.39 867.32V892.92Z" fill="#a5d6da"/><path d="M1313.51 892.92V874.66L1314.29 870.21H1314.73L1315.51 874.66V892.92Z" fill="#a5d6da"/><path d="M1315.18 892.92V871.1L1316.4 866.65H1316.85L1318.07 871.1V892.92Z" fill="#6fb9c3"/><path d="M1317.29 892.92V864.09L1318.52 859.63H1318.96L1320.19 864.09V892.92Z" fill="#5fa9b5"/><path d="M1320.41 892.92V852.85L1321.41 848.39H1321.85L1322.86 852.85V892.92Z" fill="#5fa9b5"/><path d="M1324.08 892.92V869.65L1325.08 865.2H1325.53L1326.53 869.65V892.92Z" fill="#8fccd2"/><path d="M1325.64 892.92V858.74L1326.42 854.29H1326.86L1327.64 858.74V892.92Z" fill="#a5d6da"/><path d="M1329.2 892.92V877.11L1329.76 872.66H1330.2L1330.76 877.11V892.92Z" fill="#a5d6da"/><path d="M1330.98 892.92V856.96L1331.76 852.51H1332.21L1332.99 856.96V892.92Z" fill="#8fccd2"/><path d="M1334.66 892.92V860.19L1335.21 855.74H1335.66L1336.21 860.19V892.92Z" fill="#6fb9c3"/><path d="M1337.44 892.92V870.21L1338.44 865.76H1338.89L1339.89 870.21V892.92Z" fill="#6fb9c3"/><path d="M1339.66 892.92V863.75L1340.22 859.3H1340.67L1341.22 863.75V892.92Z" fill="#5fa9b5"/><path d="M1341.78 892.92V855.41L1342.56 850.95H1343.0L1343.78 855.41V892.92Z" fill="#a5d6da"/><path d="M1345.34 892.92V870.88L1346.12 866.42H1346.57L1347.34 870.88V892.92Z" fill="#5fa9b5"/><path d="M1346.79 892.92V869.88L1347.79 865.42H1348.24L1349.24 869.88V892.92Z" fill="#6fb9c3"/><path d="M1349.79 892.92V870.54L1351.02 866.09H1351.46L1352.69 870.54V892.92Z" fill="#6fb9c3"/><path d="M1352.13 892.92V869.54L1353.36 865.09H1353.8L1355.02 869.54V892.92Z" fill="#8fccd2"/><path d="M1355.58 892.92V856.63L1356.81 852.18H1357.25L1358.48 856.63V892.92Z" fill="#6fb9c3"/><path d="M1357.92 892.92V870.65L1358.7 866.2H1359.14L1359.92 870.65V892.92Z" fill="#5fa9b5"/><path d="M1360.81 892.92V859.3L1361.59 854.85H1362.04L1362.82 859.3V892.92Z" fill="#5fa9b5"/><path d="M1364.26 892.92V858.19L1365.04 853.74H1365.49L1366.27 858.19V892.92Z" fill="#5fa9b5"/><path d="M1286.12 895.14V852.85Q1288.35 849.95 1290.58 852.85V895.14Z" fill="#1b7f84"/><path d="M1261.08 895.14V850.62Q1262.75 847.72 1264.42 850.62V895.14Z" fill="#1b7f84"/><path d="M1317.63 895.14V833.92Q1319.52 831.03 1321.41 833.92V895.14Z" fill="#1b7f84"/><path d="M1240.71 895.14V875.11Q1242.71 872.21 1244.72 875.11V895.14Z" fill="#1b7f84"/><path d="M1271.88 895.14V869.54Q1273.88 866.65 1275.88 869.54V895.14Z" fill="#1b7f84"/><path d="M1296.37 895.14V870.65Q1298.37 867.76 1300.37 870.65V895.14Z" fill="#1b7f84"/><path d="M1313.06 895.14V870.65Q1315.07 867.76 1317.07 870.65V895.14Z" fill="#1b7f84"/><path d="M1323.97 895.14V869.54Q1326.2 866.65 1328.42 869.54V895.14Z" fill="#1b7f84"/><path d="M1347.34 895.14V876.22Q1349.57 873.33 1351.8 876.22V895.14Z" fill="#1b7f84"/><path d="M1343.45 895.14V880.67Q1345.12 877.78 1346.79 880.67V895.14Z" fill="#1b7f84"/><path d="M1335.66 895.14V879.56Q1337.33 876.67 1339.0 879.56V895.14Z" fill="#1b7f84"/><path d="M1251.06 895.14V879.56Q1252.73 876.67 1254.4 879.56V895.14Z" fill="#1b7f84"/><path d="M1281.45 895.14V877.33Q1282.79 874.44 1284.12 877.33V895.14Z" fill="#1b7f84"/><path d="M1227.69 895.14V884.01Q1229.36 881.12 1231.03 884.01V895.14Z" fill="#1b7f84"/><path d="M1337.33 899.59V830.58L1340.44 827.47L1343.78 830.58V899.59Z" fill="url(#pL)"/><path d="M1337.33 899.59V830.58H1338.11V899.59Z" fill="#7cc6d2"/><rect x="1222.12" y="884.01" width="6.12" height="33.95" fill="#1c2947"/><rect x="1228.24" y="887.35" width="10.02" height="30.61" fill="url(#pA)"/><rect x="1238.26" y="881.79" width="1.67" height="36.18" fill="#1c2947"/><rect x="1239.93" y="892.92" width="6.12" height="25.04" fill="url(#pB)"/><rect x="1246.05" y="886.24" width="10.57" height="31.72" fill="url(#pA)"/><rect x="1264.98" y="880.67" width="11.13" height="37.29" fill="url(#pB)"/><rect x="1256.63" y="891.8" width="19.48" height="26.16" fill="#157a7d"/><rect x="1276.11" y="882.9" width="6.68" height="35.06" fill="url(#pC)"/><rect x="1282.79" y="877.33" width="1.67" height="40.63" fill="#1c2947"/><rect x="1284.46" y="888.46" width="5.57" height="29.5" fill="url(#pB)"/><rect x="1290.02" y="880.67" width="6.12" height="37.29" fill="url(#pA)"/><rect x="1296.14" y="884.01" width="3.34" height="33.95" fill="url(#pB)"/><rect x="1299.48" y="878.45" width="5.57" height="39.51" fill="url(#pC)"/><rect x="1305.05" y="882.9" width="7.24" height="35.06" fill="url(#pC)"/><rect x="1312.28" y="875.11" width="1.67" height="42.85" fill="#1c2947"/><rect x="1313.95" y="888.46" width="6.12" height="29.5" fill="url(#pB)"/><rect x="1320.07" y="880.67" width="6.12" height="37.29" fill="url(#pA)"/><rect x="1326.2" y="884.01" width="3.34" height="33.95" fill="url(#pB)"/><rect x="1329.54" y="878.45" width="6.12" height="39.51" fill="url(#pC)"/><rect x="1335.66" y="881.79" width="2.23" height="36.18" fill="#1c2947"/><rect x="1354.02" y="886.24" width="1.67" height="31.72" fill="#1c2947"/><rect x="1346.23" y="892.92" width="7.79" height="25.04" fill="url(#pC)"/><rect x="1333.99" y="901.82" width="12.24" height="16.14" fill="url(#pA)"/><rect x="1355.69" y="897.37" width="5.01" height="20.59" fill="url(#pB)"/><rect x="1360.7" y="890.69" width="8.01" height="27.27" fill="url(#pA)"/><rect x="1230.47" y="884.57" width="5.57" height="2.89" fill="#d8482f"/><rect x="1249.39" y="883.12" width="6.68" height="2.89" fill="#e0522f"/><rect x="1266.65" y="878.45" width="5.01" height="2.89" fill="#e8772a"/><rect x="1291.69" y="878.45" width="3.34" height="2.89" fill="#e8772a"/><rect x="1300.59" y="876.44" width="3.9" height="2.89" fill="#cf4b35"/><rect x="1321.19" y="878.67" width="3.9" height="2.89" fill="#e8772a"/><rect x="1330.09" y="876.44" width="4.45" height="2.89" fill="#cf4b35"/><rect x="1347.9" y="890.91" width="4.45" height="2.89" fill="#e86a50"/><rect x="1359.59" y="888.91" width="9.13" height="2.89" fill="#1c5f8a"/><rect x="1256.63" y="891.8" width="19.48" height="26.16" fill="#157a7d"/><path d="M1263.86 917.96V899.59H1269.43V917.96" fill="#0f6669"/><path d="M1221.57 835.04Q1222.46 838.37 1221.79 842.83V835.04Z" fill="#5a1e10"/></g></svg>
<span class="t" style="left:1238.60px;top:929.30px;font-size:15px;line-height:15px;color:#222;letter-spacing:-0.350px;width:130.4px;overflow:hidden;">VR Panoramic and 3D</span>
<svg width="1725" height="1015" viewBox="0 0 1725 1015" style="left:0;top:0;"><g fill="none" stroke="#505050" stroke-width="1.8" stroke-linecap="round" stroke-linejoin="round"><circle cx="486" cy="68.4" r="10.2"/><path d="M478.2 57.2A6.8 6.8 0 1 0 471.3 67.2"/><path d="M464.6 63.8A4.6 4.6 0 1 0 465.8 72"/><path d="M648.4 51L607 67.6L618 74.6L634.4 85.6Z"/><path d="M648.4 51L618 74.6L619.6 87.6L626.2 80.2"/><path d="M713.4 56.4C721 53.4 732.6 53.4 740.2 56.4C744.2 58 746.6 66 747.6 74C748.2 79.4 745.6 81.2 743.2 80.6C740.4 79.8 738.4 73.8 726.8 73.8C715.2 73.8 713.2 79.8 710.4 80.6C708 81.2 705.4 79.4 706 74C707 66 709.4 58 713.4 56.4Z"/><circle cx="717.6" cy="67" r="4.2" stroke-width="1.6"/><circle cx="717.6" cy="67" r="1.3" stroke-width="1.4"/><circle cx="734.4" cy="62.6" r="2.9" stroke-width="1.6"/><circle cx="739" cy="70.6" r="2.9" stroke-width="1.6"/><path d="M817.6 59.6L838.6 50.6L859.6 59.8L838.2 67.6Z"/><path d="M830.4 65V74C833 78.6 846 78.6 849.4 72.4V64"/><path d="M840.6 58.2L827.8 63.6V78.4"/><path d="M826.4 80.4h2.8M826 82v5.6M827.8 82.4v5.4M829.6 82v5.6" stroke-width="1.1" stroke="#777"/><path d="M944 56L970 49.6V76.6L947.2 70"/><path d="M943 56H936.6C932.6 56 930 59 930 62.8C930 66.6 932.6 69.6 936.6 69.6H943Z"/><path d="M938 73.4L941.2 86.6L946.4 85.8L943.6 73"/><path d="M1148.4 49H1166.4Q1169 49 1170.8 50.8L1175.6 55.8Q1177.4 57.8 1177.4 60.4V85Q1177.4 88 1174.4 88H1148.4Q1145.4 88 1145.4 85V52Q1145.4 49 1148.4 49Z" stroke-width="2" stroke="#5a5a5a"/></g><g fill="none" stroke="#161616"><g stroke-width="2.1"><circle cx="1049.4" cy="68.4" r="17.65"/><ellipse cx="1049.4" cy="68.4" rx="8.65" ry="17.65"/><path d="M1049.4 50.75V86.05M1031.75 68.4H1067.05M1033.82 60.10H1064.98M1033.82 76.70H1064.98"/></g></g><g fill="none" stroke-linecap="round" stroke-linejoin="round"><path d="M1333 377L1338.8 382.6L1344.6 377" stroke="#a0a0a0" stroke-width="2"/><path d="M1333 470.6L1338.8 476.6L1344.6 470.6" stroke="#1a1a1a" stroke-width="2.4"/><path d="M1388.2 887L1394.2 892.6L1388.2 898.2" stroke="#333" stroke-width="2.4"/></g></svg>
<svg width="660" height="612.4" viewBox="372 148 660 612.4" style="left:372px;top:148px;overflow:hidden;"><g fill="none" stroke="#555"><rect x="448.9" y="276.2" width="96.4" height="65.4" rx="2" stroke-width="2"/><path d="M448.9 285.2H545.3" stroke-width="2"/><path d="M453.5 281.0H461.5" stroke-width="1.8"/><g stroke-width="1.7"><circle cx="497.2" cy="313.2" r="18.45"/><ellipse cx="497.2" cy="313.2" rx="9.04" ry="18.45"/><path d="M497.2 294.75V331.65M478.75 313.2H515.65M480.91 304.53H513.49M480.91 321.87H513.49"/></g></g><g fill="none" stroke="#555"><rect x="653.5" y="276.2" width="96.4" height="65.4" rx="2" stroke-width="2"/><path d="M653.5 285.2H749.9" stroke-width="2"/><path d="M658.1 281.0H666.1" stroke-width="1.8"/><g stroke-width="1.7"><circle cx="701.8" cy="313.2" r="18.45"/><ellipse cx="701.8" cy="313.2" rx="9.04" ry="18.45"/><path d="M701.8 294.75V331.65M683.35 313.2H720.25M685.51 304.53H718.09M685.51 321.87H718.09"/></g></g><g fill="none" stroke="#555"><rect x="858.1" y="276.2" width="96.4" height="65.4" rx="2" stroke-width="2"/><path d="M858.1 285.2H954.5" stroke-width="2"/><path d="M862.7 281.0H870.7" stroke-width="1.8"/><g stroke-width="1.7"><circle cx="906.4" cy="313.2" r="18.45"/><ellipse cx="906.4" cy="313.2" rx="9.04" ry="18.45"/><path d="M906.4 294.75V331.65M887.95 313.2H924.85M890.11 304.53H922.69M890.11 321.87H922.69"/></g></g><g fill="none" stroke="#555"><rect x="448.9" y="478.2" width="96.4" height="65.4" rx="2" stroke-width="2"/><path d="M448.9 487.2H545.3" stroke-width="2"/><path d="M453.5 483.0H461.5" stroke-width="1.8"/><g stroke-width="1.7"><circle cx="497.2" cy="515.2" r="18.45"/><ellipse cx="497.2" cy="515.2" rx="9.04" ry="18.45"/><path d="M497.2 496.75V533.65M478.75 515.2H515.65M480.91 506.53H513.49M480.91 523.87H513.49"/></g></g><g fill="none" stroke="#555" stroke-width="2"><rect x="683.7" y="475.4" width="35" height="71" rx="6.5"/><rect x="696.7" y="537.8" width="9" height="4.6" rx="2.3" stroke-width="1.6"/><path d="M696.7 479.0q4.5 2.6 9 0" stroke-width="1.5"/></g><g fill="none" stroke="#555" stroke-width="2"><rect x="888.3" y="475.4" width="35" height="71" rx="6.5"/><rect x="901.3" y="537.8" width="9" height="4.6" rx="2.3" stroke-width="1.6"/><path d="M901.3 479.0q4.5 2.6 9 0" stroke-width="1.5"/></g><g fill="none" stroke="#555" stroke-width="2"><rect x="479.1" y="677.4" width="35" height="71" rx="6.5"/><rect x="492.1" y="739.8" width="9" height="4.6" rx="2.3" stroke-width="1.6"/><path d="M492.1 681.0q4.5 2.6 9 0" stroke-width="1.5"/></g><g fill="none" stroke="#555" stroke-width="2"><rect x="683.7" y="677.4" width="35" height="71" rx="6.5"/><rect x="696.7" y="739.8" width="9" height="4.6" rx="2.3" stroke-width="1.6"/><path d="M696.7 681.0q4.5 2.6 9 0" stroke-width="1.5"/></g><g fill="none" stroke="#555" stroke-width="2"><rect x="888.3" y="677.4" width="35" height="71" rx="6.5"/><rect x="901.3" y="739.8" width="9" height="4.6" rx="2.3" stroke-width="1.6"/><path d="M901.3 681.0q4.5 2.6 9 0" stroke-width="1.5"/></g></svg>
<svg width="312" height="151" viewBox="34 817 312 151" style="left:34px;top:817px;overflow:hidden;"><defs>
<radialGradient id="glow" cx="0.5" cy="0.5" r="0.5">
<stop offset="0" stop-color="#ffffff" stop-opacity="1"/>
<stop offset="0.1" stop-color="#ffffff" stop-opacity="0.92"/>
<stop offset="0.3" stop-color="#e4f3ea" stop-opacity="0.66"/>
<stop offset="0.55" stop-color="#b5d9c4" stop-opacity="0.46"/>
<stop offset="0.8" stop-color="#7fba99" stop-opacity="0.2"/>
<stop offset="1" stop-color="#0a6b3a" stop-opacity="0"/>
</radialGradient>
<linearGradient id="fadeb" x1="0" y1="0" x2="0" y2="1"><stop offset="0" stop-color="#0a6b3a" stop-opacity="0"/><stop offset="1" stop-color="#075f32" stop-opacity="1"/></linearGradient>
<filter id="lf" x="-8%" y="-30%" width="116%" height="160%" color-interpolation-filters="sRGB">
<feMorphology in="SourceAlpha" operator="dilate" radius="2.6" result="d1"/>
<feGaussianBlur in="d1" stdDeviation="0.9" result="b1"/>
<feComponentTransfer in="b1" result="o1"><feFuncA type="linear" slope="4" intercept="-1.3"/></feComponentTransfer>
<feFlood flood-color="#ffffff" result="fw"/><feComposite in="fw" in2="o1" operator="in" result="w"/>
<feMerge><feMergeNode in="w"/><feMergeNode in="SourceGraphic"/></feMerge>
</filter>
</defs><rect x="34" y="817" width="312" height="151" fill="#096a39"/><rect x="34.5" y="817.5" width="311" height="150" fill="none" stroke="#04522b" stroke-width="1"/><ellipse cx="123.4" cy="880" rx="80" ry="47" fill="url(#glow)"/><g stroke-linecap="round" fill="none"><path d="M117.8 835.4L95.4 888" stroke="#bff0d6" stroke-width="2.4" opacity="0.7"/><path d="M117.8 835.4L95.4 888" stroke="#fff" stroke-width="1.1"/><path d="M131.8 842.6L178 876" stroke="#bff0d6" stroke-width="2.4" opacity="0.7"/><path d="M131.8 842.6L178 876" stroke="#fff" stroke-width="1.1"/></g><path d="M93 892L97 886L100 888L104 881L112 880L117 884L119 893L116 905L113 912L106 912L101 917L100 911L96 900Z" fill="#c89bdb"/><path d="M104 884L110 883L112 896L107 906L102 900Z" fill="#d9b5e8"/><path d="M98 906L113 899" stroke="#efe0f5" stroke-width="1"/><path d="M155 876L158 872L161 876L168 875L172 871L174 876L173 896L171 901L156 901L154 896Z" fill="#f2923c"/><path d="M147 884L155 880L156 884L149 887Z" fill="#f2923c"/><path d="M172 878L176 872L178 875L174 884Z" fill="#f2923c"/><rect x="154" y="897" width="19" height="4.6" fill="#3c4f78"/><path d="M155 902L153 907L156 907L158 902ZM168 902L170 905L174 906" fill="#f2923c"/><path d="M171 903C176 902 175 908 177 912L180 914" stroke="#f2923c" stroke-width="2" fill="none"/><rect x="160" y="871" width="8" height="3" fill="#4f9a8a"/><path d="M91 941L97 936L100 929L108 928L116 932L118 940L113 948L104 950L97 946Z" fill="#6a58aa" opacity="0.6"/><path d="M152 929L173 929L174 938L170 942L156 942L152 938Z" fill="#6f6a26" opacity="0.6"/><path d="M131 953.6L178 940" stroke="#3fae7c" stroke-width="1.4" opacity="0.9"/><path d="M95 944L110 967" stroke="#3fae7c" stroke-width="1.4" opacity="0.9"/><g font-family="'Liberation Sans',Arial,sans-serif" font-weight="700" font-size="29.6" fill="#e5262b" stroke="#e5262b" stroke-width="1.5" stroke-linejoin="round" filter="url(#lf)"><text x="210.6" y="889.8" textLength="84.6" lengthAdjust="spacingAndGlyphs" transform="rotate(-1.1 210.6 889.8)">LAYER</text><text x="211" y="918.4" textLength="108" lengthAdjust="spacingAndGlyphs" transform="rotate(0.8 211 918.4)">EFFECTS</text></g></svg>
<div class="b" style="left:1436px;top:3px;width:272.5px;height:395px;background:#e5e5e5;"></div>
<div class="b" style="left:1436px;top:3px;width:17px;height:35px;background:#e6e6e6;"></div>
<div class="b" style="left:1436px;top:38px;width:17px;height:18px;background:#cfcfcf;"></div>
<div class="b" style="left:1436px;top:56px;width:17px;height:21px;background:#d9d9d9;"></div>
<div class="b" style="left:1436px;top:77px;width:17px;height:86px;background:#e9e9e9;"></div>
<div class="b" style="left:1436px;top:163px;width:17px;height:1.5px;background:#8c8c8c;"></div>
<div class="b" style="left:1436px;top:164.5px;width:17px;height:59.5px;background:#e9e9e9;"></div>
<div class="b" style="left:1436px;top:224px;width:17px;height:1.5px;background:#9a9a9a;"></div>
<div class="b" style="left:1436px;top:225.5px;width:17px;height:22.5px;background:#f1f1f1;"></div>
<div class="b" style="left:1436px;top:248px;width:17px;height:1.5px;background:#9a9a9a;"></div>
<div class="b" style="left:1436px;top:249.5px;width:17px;height:12.5px;background:#e4e4e4;"></div>
<div class="b" style="left:1436px;top:262px;width:17px;height:28px;background:#d6d6d6;"></div>
<div class="b" style="left:1436px;top:290px;width:17px;height:10px;background:#dedede;"></div>
<div class="b" style="left:1436px;top:300px;width:17px;height:41px;background:#d4d4d4;"></div>
<div class="b" style="left:1436px;top:341px;width:17px;height:2px;background:#c0c0c0;"></div>
<div class="b" style="left:1436px;top:343px;width:17px;height:33px;background:#d2d2d2;"></div>
<div class="b" style="left:1436px;top:376px;width:17px;height:22px;background:#dedede;"></div>
<div class="b" style="left:1436px;top:0;width:17px;height:400px;overflow:hidden;">
<span class="t" style="left:-3.00px;top:94.48px;font-size:15.5px;line-height:15.5px;color:#222;">as</span>
<span class="t" style="left:0.40px;top:229.48px;font-size:15.5px;line-height:15.5px;color:#222;">tin</span>
</div>
<div class="b" style="left:1436px;top:3px;width:272.5px;height:28px;background:#e9e9e9;"></div>
<div class="b" style="left:1453px;top:382px;width:255.5px;height:16px;background:#e4e4e4;"></div>
<div class="b" style="left:1653.6px;top:382px;width:1.6000000000001364px;height:16px;background:#c9c9c9;"></div>
<div class="b" style="left:1655.2px;top:382px;width:2.3999999999998636px;height:16px;background:#f4f4f4;"></div>
<div class="b" style="left:1451px;top:3.2px;width:111px;height:25.6px;background:#a9a9a9;border:1px solid #8e8e8e;border-radius:2px;"></div>
<span class="t" style="left:1462.00px;top:7.63px;font-size:16.5px;line-height:16.5px;color:#2e2e2e;letter-spacing:-1.027px;">Essentials</span>
<div class="b" style="left:1566.6px;top:-3px;width:138.0px;height:25.4px;background:#ececec;border:1.5px solid #828282;border-radius:0 0 5px 5px;box-shadow:inset 0 -1px 0 #fff;"></div>
<div class="b" style="left:1604.4px;top:0px;width:1.199999999999818px;height:22px;background:#8a8a8a;"></div>
<div class="b" style="left:1640.6px;top:0px;width:1.2000000000000455px;height:22px;background:#8a8a8a;"></div>
<div class="b" style="left:1452px;top:32.6px;width:253.5999999999999px;height:349.59999999999997px;background:#f2f2f2;box-shadow:3px 3px 3px rgba(0,0,0,0.65), 0 0 0 0.6px #cfcfcf;"></div>
<div class="b" style="left:1454.6px;top:183.3px;width:247.4000000000001px;height:29.299999999999983px;background:#90bee4;"></div>
<div class="b" style="left:1454.6px;top:183.3px;width:29.200000000000045px;height:29.299999999999983px;background:#5b9bd4;"></div>
<span class="t" style="left:1498.00px;top:42.45px;font-size:16.6px;line-height:16.6px;color:#111;letter-spacing:0.086px;-webkit-text-stroke:0.15px #111;">Animator</span>
<span class="t" style="left:1498.00px;top:71.95px;font-size:16.6px;line-height:16.6px;color:#111;letter-spacing:-0.923px;-webkit-text-stroke:0.15px #111;">Classic</span>
<span class="t" style="left:1498.00px;top:101.55px;font-size:16.6px;line-height:16.6px;color:#111;letter-spacing:-0.722px;-webkit-text-stroke:0.15px #111;">Debug</span>
<span class="t" style="left:1498.00px;top:131.15px;font-size:16.6px;line-height:16.6px;color:#111;letter-spacing:-0.686px;-webkit-text-stroke:0.15px #111;">Designer</span>
<span class="t" style="left:1498.00px;top:160.95px;font-size:16.6px;line-height:16.6px;color:#111;letter-spacing:-0.587px;-webkit-text-stroke:0.15px #111;">Developer</span>
<span class="t" style="left:1498.00px;top:189.95px;font-size:16.6px;line-height:16.6px;color:#111;letter-spacing:-1.022px;-webkit-text-stroke:0.15px #111;">Essentials</span>
<span class="t" style="left:1498.00px;top:219.55px;font-size:16.6px;line-height:16.6px;color:#111;letter-spacing:-0.881px;-webkit-text-stroke:0.15px #111;">Small Screen</span>
<span class="t" style="left:1498.00px;top:258.55px;font-size:16.6px;line-height:16.6px;color:#7c7c7c;letter-spacing:-0.857px;">Start</span>
<span class="t" style="left:1498.00px;top:297.55px;font-size:16.6px;line-height:16.6px;color:#111;letter-spacing:-0.543px;-webkit-text-stroke:0.15px #111;">New Workspace</span>
<span class="t" style="left:1498.00px;top:327.35px;font-size:16.6px;line-height:16.6px;color:#707070;letter-spacing:-0.619px;">Delete Workspace</span>
<span class="t" style="left:1498.00px;top:356.95px;font-size:16.6px;line-height:16.6px;color:#111;letter-spacing:-0.797px;-webkit-text-stroke:0.15px #111;">Reset &quot;Essentials&quot;...</span>
<div class="b" style="left:1492.4px;top:246.6px;width:209.19999999999982px;height:2.200000000000017px;background:#d0d0d0;border-bottom:1px solid #fafafa;"></div>
<div class="b" style="left:1492.4px;top:285.6px;width:209.19999999999982px;height:2.1999999999999886px;background:#d0d0d0;border-bottom:1px solid #fafafa;"></div>
<svg width="290" height="400" viewBox="1435 0 290 400" style="left:1435px;top:0;"><path d="M1542.6 16.4H1549.2L1545.9 20Z" fill="#222"/><rect x="1578.4" y="12" width="13.4" height="3.8" fill="#333"/><g fill="none" stroke="#333" stroke-width="2"><rect x="1621" y="5.4" width="9" height="7.2"/><rect x="1616" y="9.6" width="9" height="6.8" fill="#ececec"/></g><path d="M1666.4 4.6L1679 15M1679 4.6L1666.4 15" stroke="#333" stroke-width="2.6" fill="none"/><path d="M1463.6 197.2L1467.4 201L1475.4 192.8" stroke="#16324f" stroke-width="2.2" fill="none"/></svg>
</body></html>
